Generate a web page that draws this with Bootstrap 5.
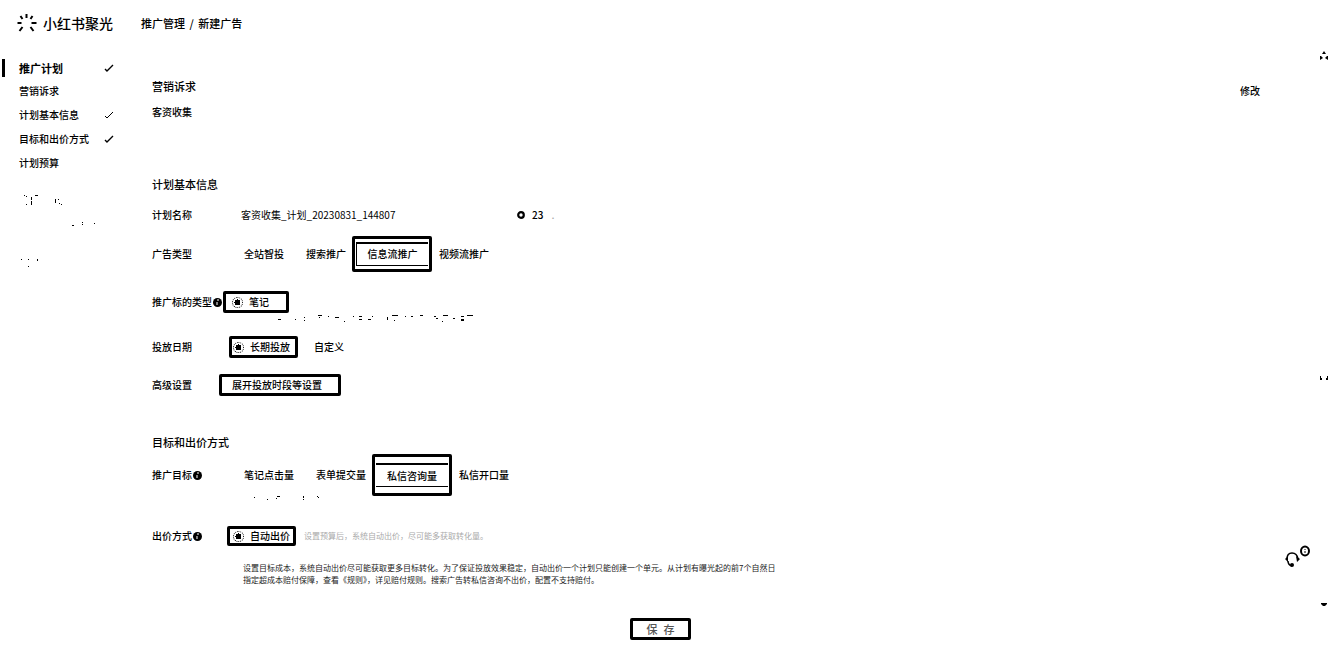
<!DOCTYPE html>
<html lang="zh-CN">
<head>
<meta charset="utf-8">
<meta name="viewport" content="width=device-width, initial-scale=1">
<title>新建广告</title>
<link href="https://cdn.jsdelivr.net/npm/bootstrap@5.3.0/dist/css/bootstrap.min.css" rel="stylesheet">
<script src="https://cdn.jsdelivr.net/npm/bootstrap@5.3.0/dist/js/bootstrap.bundle.min.js" defer></script>
<style>
body{font-family:"Noto Sans CJK SC",sans-serif;font-size:10px;line-height:12px;color:#000;background:#fff;font-weight:500}
a{color:#000;text-decoration:none}
svg{display:block;flex:none}
.top-bar{height:48px;padding:0 0 2px 16px}
.brand-name{font-size:14px;line-height:20px;margin-left:6px}
.crumbs{font-size:11px;margin-left:28px}
.crumbs i{font-style:normal;margin:0 2px}
.side{width:152px;flex:none;padding-top:6px}
.side a{display:flex;align-items:center;justify-content:space-between;height:24px;padding:0 38px 0 19px}
.side a.current{font-size:11px;font-weight:700;border-left:3px solid #000;height:18px;margin:5px 0 2px 2px;padding-left:14px}
.specks{margin-top:16px}
.pane{min-width:0}
h2{font-size:11px;line-height:24px;font-weight:500;margin:0}
.goal{height:124px;padding-top:26px}
.edit{margin:9px 73px 0 0}
.form-line{display:flex;align-items:center}
.lab{display:flex;align-items:center;width:92px;flex:none;white-space:nowrap}
.lab svg{margin-left:1px}
button{background:none;border:0;padding:0;color:#000;font-weight:500}
.frame{border:3px solid #000;border-radius:2px;display:flex;align-items:center;height:22px}
.pick{width:80px;height:36px;padding:4px 1px;margin:0 7px 0 6px}
.pick button{flex:1;height:24px;border:1px solid #000;border-width:2px 0 1px}
.pick.first button{border-left-width:1px}
.pick.tall{height:42px}
.gap-tab{margin-left:22px}
.choice{display:flex;align-items:center;gap:6px}
.choice input{appearance:none;width:11px;height:11px;margin:0;border:1px dotted #000;border-radius:50%;background:#fff}
.choice input:checked{background:radial-gradient(circle,#000 0 3px,#fff 3px)}
.plan{border:0;padding:0;width:276px;color:#000;font-weight:400;background:none}
.mute{font-size:8px;font-weight:400}
.pale{color:#aaa}
.note{line-height:12px;color:#222;margin:16px 0 0 91px}
.save{width:61px;border-color:#000;justify-content:center;font-size:11px;gap:6px;color:#555}
.rail{right:4px;top:49px;bottom:53px;width:10px}
.help{right:22px;top:544px}
</style>
</head>
<body class="position-relative">
<header class="top-bar d-flex align-items-center">
<svg width="21" height="20" viewBox="0 0 20 20" stroke="#000" stroke-width="2" fill="none"><path d="M10 1v4M4 3l2 3M16 3l-2 3M1 10h4M15 10h5M6 14l-3 4M14 14l3 4"/></svg>
<span class="brand-name">小红书聚光</span>
<nav class="crumbs"><a href="#">推广管理</a> <i>/</i> <span>新建广告</span></nav>
</header>
<div class="d-flex">
<nav class="side">
<a class="current" href="#">推广计划<svg width="10" height="10" viewBox="0 0 10 10" fill="none" stroke="#000" stroke-width="1.4"><path d="M1 6l2 2 6-6"/></svg></a>
<a href="#">营销诉求</a>
<a href="#">计划基本信息<svg width="10" height="10" viewBox="0 0 10 10" fill="none" stroke="#000"><path d="M1 6l2 2 6-6"/></svg></a>
<a href="#">目标和出价方式<svg width="10" height="10" viewBox="0 0 10 10" fill="none" stroke="#000" stroke-width="1.4"><path d="M1 6l2 2 6-6"/></svg></a>
<a href="#">计划预算</a>
<svg class="specks" width="120" height="100" viewBox="0 178 120 100" shape-rendering="crispEdges"><path d="M24 182h1v1h-1zM26 183h1v1h-1zM31 184h1v3h-1zM31 188h1v4h-1zM35 182h3v1h-3zM26 191h1v1h-1zM55 186h1v4h-1zM58 186h1v1h-1zM59 190h1v1h-1zM61 191h1v1h-1zM72 212h2v1h-2zM82 209h1v1h-1zM82 211h1v1h-1zM94 210h1v1h-1zM21 246h1v1h-1zM28 246h1v1h-1zM37 246h1v2h-1zM28 253h1v1h-1z"/></svg>
</nav>
<main class="pane flex-grow-1">
<section class="goal">
<div class="d-flex justify-content-between align-items-center"><h2>营销诉求</h2><a class="edit" href="#">修改</a></div>
<div class="mt-2">客资收集</div>
</section>
<section>
<h2>计划基本信息</h2>
<div class="form-line" style="height:38px"><label class="lab" style="width:89px" for="plan">计划名称</label><input class="plan" id="plan" value="客资收集_计划_20230831_144807"><svg width="8" height="8" viewBox="0 0 8 8"><circle cx="4" cy="4" r="2.8" fill="none" stroke="#000" stroke-width="2.2"/></svg><span style="margin-left:7px">23</span><span class="pale ms-2">.</span></div>
<div class="form-line" style="height:39px"><span class="lab">广告类型</span><button>全站智投</button><button class="gap-tab">搜索推广</button><div class="frame pick first"><button>信息流推广</button></div><button>视频流推广</button></div>
<div class="form-line" style="height:22px;margin-top:18px"><span class="lab" style="width:71px">推广标的类型<svg width="9" height="9" viewBox="0 0 9 9"><circle cx="4.500" cy="4.500" r="4.500"/><path d="M4 2h2M4 4v3" stroke="#fff"/></svg></span><div class="frame" style="width:66px;padding-left:6px"><label class="choice"><input type="radio" name="target" checked>笔记</label></div></div>
<svg width="360" height="10" viewBox="152 312 360 10" shape-rendering="crispEdges"><path d="M278 318h3v1h-3zM295 318h1v1h-1zM304 316h1v1h-1zM304 319h1v1h-1zM318 314h4v1h-4zM319 316h1v1h-1zM328 315h1v1h-1zM335 316h4v1h-4zM344 320h1v1h-1zM353 315h1v1h-1zM359 315h3v1h-3zM359 318h3v1h-3zM368 318h3v1h-3zM372 315h1v1h-1zM387 316h1v3h-1zM392 314h6v1h-6zM394 319h1v1h-1zM405 315h1v1h-1zM411 315h2v1h-2zM420 314h3v1h-3zM434 315h2v1h-2zM436 317h2v1h-2zM443 314h5v1h-5zM442 320h1v1h-1zM453 317h2v1h-2zM461 315h3v1h-3zM461 318h3v2h-3zM467 314h6v1h-6z"/></svg>
<div class="form-line" style="height:22px;margin-top:13px"><span class="lab" style="width:77px">投放日期</span><div class="frame" style="width:69px;padding-left:1px"><label class="choice"><input type="radio" name="date" checked>长期投放</label></div><button class="ms-3">自定义</button></div>
<div class="form-line mt-3"><span class="lab" style="width:67px">高级设置</span><button class="frame" style="width:122px;padding-left:10px">展开投放时段等设置</button></div>
</section>
<section style="margin-top:34px">
<h2>目标和出价方式</h2>
<div class="form-line" style="height:42px"><span class="lab">推广目标<svg width="9" height="9" viewBox="0 0 9 9"><circle cx="4.500" cy="4.500" r="4.500"/><path d="M4 2h2M4 4v3" stroke="#fff"/></svg></span><button>笔记点击量</button><button class="gap-tab">表单提交量</button><div class="frame pick tall"><button>私信咨询量</button></div><button>私信开口量</button></div>
<svg width="200" height="6" viewBox="152 495 200 6" shape-rendering="crispEdges"><path d="M254 496h1v1h-1zM267 498h1v1h-1zM277 495h3v1h-3zM276 497h1v1h-1zM303 495h1v2h-1zM303 498h1v1h-1zM317 495h1v1h-1zM318 496h1v1h-1z"/></svg>
<div class="form-line" style="height:20px;margin-top:24px"><span class="lab" style="width:75px">出价方式<svg width="9" height="9" viewBox="0 0 9 9"><circle cx="4.500" cy="4.500" r="4.500"/><path d="M4 2h2M4 4v3" stroke="#fff"/></svg></span><div class="frame" style="width:69px;height:20px;padding-left:3px"><label class="choice"><input type="radio" name="bid" checked>自动出价</label></div><span class="mute pale ms-2">设置预算后，系统自动出价，尽可能多获取转化量。</span></div>
<p class="mute note">设置目标成本，系统自动出价尽可能获取更多目标转化。为了保证投放效果稳定，自动出价一个计划只能创建一个单元。从计划有曝光起的前7个自然日<br>指定超成本赔付保障，查看《规则》，详见赔付规则。搜索广告转私信咨询不出价，配置不支持赔付。</p>
</section>
</main>
</div>
<footer class="d-flex justify-content-center" style="margin:32px 12px 20px 0"><button class="frame save"><span>保</span><span>存</span></button></footer>
<div class="rail position-absolute d-flex flex-column justify-content-between align-items-center">
<svg width="10" height="12" viewBox="0 0 10 12"><path d="M3 5l2-3 2 3zM1 7h1l2 2-3 2zM9 7H8L6 9l3 2z"/></svg>
<svg width="8" height="4" viewBox="0 0 8 4" style="margin-top:92px"><path d="M0 0h1v2h1v2H0zM7 0h1v4H6V2h1z"/></svg>
<svg width="6" height="4" viewBox="0 0 6 4"><path d="M0 0h6v1L4 3H2L0 1z"/></svg>
</div>
<svg class="help position-absolute" width="27" height="24" viewBox="1284 543 27 24" fill="none" stroke="#000"><path d="M1287 558q0-6 5-6t6 6M1288 560q0 4 4 5" stroke-width="1.500"/><path d="M1285 558l3-3v6zM1296 555l4 3-3 3z" fill="#000" stroke="none"/><circle cx="1292" cy="564" r="2" fill="#000" stroke="none"/><ellipse cx="1305" cy="550" rx="4" ry="4.500" stroke-width="2"/><path d="M1305 548v1M1305 550v2"/></svg>
</body>
</html>
